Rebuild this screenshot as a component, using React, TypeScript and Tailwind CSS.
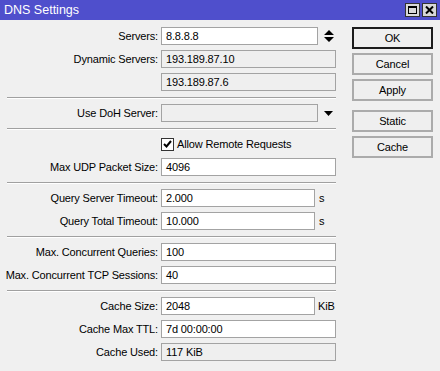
import React from "react";

const font = { fontFamily: '"Liberation Sans", Arial, sans-serif' };

function Field({ value, width = "w-[175px]", disabled = false }: { value?: string; width?: string; disabled?: boolean }) {
  return (
    <div
      className={`${width} h-[18px] border border-[#a3a3a3] flex items-center px-[4px] text-black ${disabled ? "bg-[#efefef]" : "bg-white"}`}
    >
      {value}
    </div>
  );
}

function Row({ label, children, className = "mt-[5px]" }: { label?: string; children: React.ReactNode; className?: string }) {
  return (
    <div className={`flex items-center h-[18px] ${className}`}>
      <div className="w-[158px] text-right text-black whitespace-nowrap">{label}</div>
      <div className="ml-[3px] flex items-center">{children}</div>
    </div>
  );
}

function Sep() {
  return <div className="ml-[7px] mt-[6px] mb-[5px] h-[2px] border-t border-[#a0a0a0] border-b border-b-white" />;
}

function Btn({ label, primary = false, className = "" }: { label: string; primary?: boolean; className?: string }) {
  return (
    <div
      className={`h-[22px] flex items-center justify-center bg-[#efefef] ${primary ? "border-2 border-[#1c1c1c]" : "border-2 border-[#ababab]"} ${className}`}
    >
      {label}
    </div>
  );
}

export default function App() {
  return (
    <div className="w-[440px] h-[371px] bg-[#f0f0f0] text-[11px] tracking-[-0.15px] overflow-hidden" style={font}>
      {/* Title bar */}
      <div className="h-[20px] bg-[#4f4fcc] flex items-center pl-[4px] pr-[3px]">
        <span className="text-white text-[12.5px] tracking-normal">DNS Settings</span>
        <div className="ml-auto flex gap-[2px]">
          <div className="w-[15px] h-[14px] bg-[#d8d8d8] border border-[#333] flex items-center justify-center">
            <div className="w-[9px] h-[8px] border border-black border-t-2" />
          </div>
          <div className="w-[15px] h-[14px] bg-[#d8d8d8] border border-[#333] flex items-center justify-center">
            <svg width="9" height="8" viewBox="0 0 9 8">
              <path d="M1 0.5 L8 7.5 M8 0.5 L1 7.5" stroke="black" strokeWidth="2" />
            </svg>
          </div>
        </div>
      </div>

      <div className="flex pt-[2px]">
        {/* Left column */}
        <div className="w-[336px] flex flex-col">
          <Row label="Servers:">
            <Field value="8.8.8.8" width="w-[157px]" />
            <svg className="ml-[6px]" width="10" height="12" viewBox="0 0 10 12">
              <path d="M5 0 L10 5 L0 5 Z M0 7 L10 7 L5 12 Z" fill="black" />
            </svg>
          </Row>
          <Row label="Dynamic Servers:">
            <Field value="193.189.87.10" disabled />
          </Row>
          <Row>
            <Field value="193.189.87.6" disabled />
          </Row>
          <Sep />
          <Row label="Use DoH Server:" className="">
            <Field width="w-[157px]" disabled />
            <svg className="ml-[6px]" width="9" height="5" viewBox="0 0 9 5">
              <path d="M0 0 L9 0 L4.5 5 Z" fill="black" />
            </svg>
          </Row>
          <Sep />
          <Row className="">
            <div className="w-[13px] h-[13px] bg-white border border-[#333] flex items-center justify-center">
              <svg width="9" height="8" viewBox="0 0 9 8">
                <path d="M1 4 L3.5 6.5 L8 1" stroke="black" strokeWidth="2" fill="none" />
              </svg>
            </div>
            <span className="ml-[3px] text-black whitespace-nowrap">Allow Remote Requests</span>
          </Row>
          <Row label="Max UDP Packet Size:">
            <Field value="4096" />
          </Row>
          <Sep />
          <Row label="Query Server Timeout:" className="">
            <Field value="2.000" width="w-[154px]" />
            <span className="ml-[4px]">s</span>
          </Row>
          <Row label="Query Total Timeout:">
            <Field value="10.000" width="w-[154px]" />
            <span className="ml-[4px]">s</span>
          </Row>
          <Sep />
          <Row label="Max. Concurrent Queries:" className="">
            <Field value="100" />
          </Row>
          <Row label="Max. Concurrent TCP Sessions:">
            <Field value="40" />
          </Row>
          <Sep />
          <Row label="Cache Size:" className="">
            <Field value="2048" width="w-[154px]" />
            <span className="ml-[3px]">KiB</span>
          </Row>
          <Row label="Cache Max TTL:">
            <Field value="7d 00:00:00" />
          </Row>
          <Row label="Cache Used:">
            <Field value="117 KiB" disabled />
          </Row>
        </div>

        {/* Buttons */}
        <div className="ml-[16px] w-[81px] flex flex-col pt-[5px] text-black">
          <Btn label="OK" primary />
          <Btn label="Cancel" className="mt-[4px]" />
          <Btn label="Apply" className="mt-[4px]" />
          <Btn label="Static" className="mt-[9px]" />
          <Btn label="Cache" className="mt-[4px]" />
        </div>
      </div>
    </div>
  );
}
